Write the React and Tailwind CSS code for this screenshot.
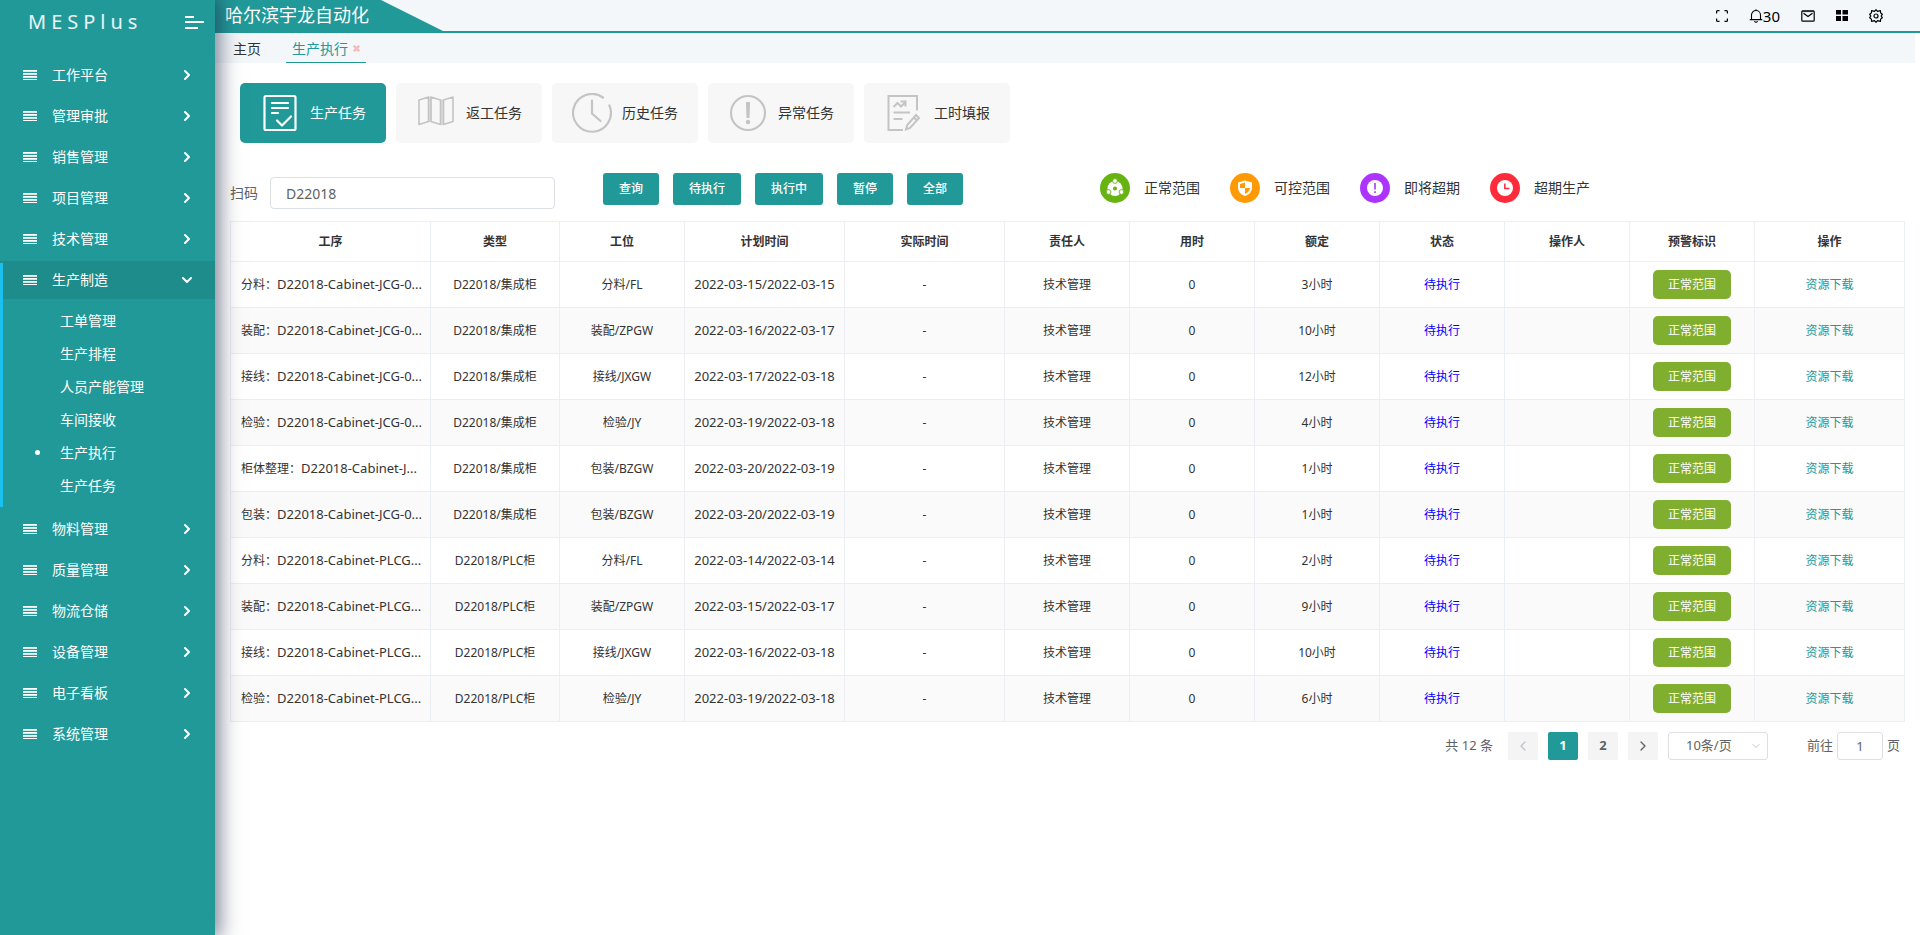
import { ChevronDown, ChevronLeft, ChevronRight } from 'lucide-react'

const menu = [
  '工作平台', '管理审批', '销售管理', '项目管理', '技术管理', '生产制造',
  '物料管理', '质量管理', '物流仓储', '设备管理', '电子看板', '系统管理',
]
const submenu = ['工单管理', '生产排程', '人员产能管理', '车间接收', '生产执行', '生产任务']

const rows = [
  ['分料：', 'D22018-Cabinet-JCG-0...', 'D22018/集成柜', '分料/FL', '2022-03-15/2022-03-15', '3小时'],
  ['装配：', 'D22018-Cabinet-JCG-0...', 'D22018/集成柜', '装配/ZPGW', '2022-03-16/2022-03-17', '10小时'],
  ['接线：', 'D22018-Cabinet-JCG-0...', 'D22018/集成柜', '接线/JXGW', '2022-03-17/2022-03-18', '12小时'],
  ['检验：', 'D22018-Cabinet-JCG-0...', 'D22018/集成柜', '检验/JY', '2022-03-19/2022-03-18', '4小时'],
  ['柜体整理：', 'D22018-Cabinet-J...', 'D22018/集成柜', '包装/BZGW', '2022-03-20/2022-03-19', '1小时'],
  ['包装：', 'D22018-Cabinet-JCG-0...', 'D22018/集成柜', '包装/BZGW', '2022-03-20/2022-03-19', '1小时'],
  ['分料：', 'D22018-Cabinet-PLCG...', 'D22018/PLC柜', '分料/FL', '2022-03-14/2022-03-14', '2小时'],
  ['装配：', 'D22018-Cabinet-PLCG...', 'D22018/PLC柜', '装配/ZPGW', '2022-03-15/2022-03-17', '9小时'],
  ['接线：', 'D22018-Cabinet-PLCG...', 'D22018/PLC柜', '接线/JXGW', '2022-03-16/2022-03-18', '10小时'],
  ['检验：', 'D22018-Cabinet-PLCG...', 'D22018/PLC柜', '检验/JY', '2022-03-19/2022-03-18', '6小时'],
]

const columns = [
  ['工序', 'w-[200px]'],
  ['类型', 'w-[129px]'],
  ['工位', 'w-[125px]'],
  ['计划时间', 'w-[160px]'],
  ['实际时间', 'w-[160px]'],
  ['责任人', 'w-[125px]'],
  ['用时', 'w-[125px]'],
  ['额定', 'w-[125px]'],
  ['状态', 'w-[125px]'],
  ['操作人', 'w-[125px]'],
  ['预警标识', 'w-[125px]'],
  ['操作', 'w-[150px]'],
]

// ── Icons ──────────────────────────────────────────────────────────────────
function BarsIcon() {
  return (
    <svg className="h-[10px] w-[14px]" viewBox="0 0 14 10" fill="currentColor" shapeRendering="crispEdges" aria-hidden="true">
      <path d="M0 0h14v1H0zM0 3h14v1H0zM0 6h14v1H0zM0 9h14v1H0z" />
      <path d="M0 1h14v1H0zM0 4h14v1H0zM0 7h14v1H0z" opacity=".8" />
    </svg>
  )
}

function TaskIcon() {
  return (
    <svg className="h-10 w-10" viewBox="0 0 40 40" fill="none" stroke="currentColor" strokeWidth="2.200" strokeLinecap="round" strokeLinejoin="round" aria-hidden="true">
      <rect x="4.500" y="3" width="31" height="34" rx="1.500" />
      <path d="M12 10h16M12 15h16M12 20h6M17 27.500l5 5 9-9" />
    </svg>
  )
}

function MapIcon() {
  return (
    <svg className="h-10 w-10" viewBox="0 0 40 40" fill="none" stroke="currentColor" strokeWidth="1.600" strokeLinejoin="round" aria-hidden="true">
      <path d="M3 7L12.500 4v24.500L3 31.500zM15 4l9.500 3v24.500L15 28.500zM27.500 7L37 4v24.500l-9.500 3z" />
      <path d="M12.500 4H15v24.500h-2.500zM24.500 7h3v24.500h-3z" fill="currentColor" fillOpacity=".5" strokeWidth=".5" />
    </svg>
  )
}

function HistoryIcon() {
  return (
    <svg className="h-10 w-10" viewBox="0 0 40 40" fill="none" stroke="currentColor" strokeWidth="2.200" strokeLinecap="round" aria-hidden="true">
      <path d="M37.400 12.500A18.900 18.900 0 1 1 31 4.500" />
      <path d="M20 7.500v13l8.500 7.500" />
    </svg>
  )
}

function AbnormalIcon() {
  return (
    <svg className="h-10 w-10" viewBox="0 0 40 40" aria-hidden="true">
      <circle cx="20" cy="20" r="17" fill="none" stroke="currentColor" strokeWidth="2.100" />
      <path d="M17.900 9h4.200l-.6 16h-3z" fill="currentColor" />
      <circle cx="20" cy="29" r="2.200" fill="currentColor" />
    </svg>
  )
}

function ReportIcon() {
  return (
    <svg className="h-10 w-10" viewBox="0 0 40 40" fill="none" stroke="currentColor" strokeWidth="2" aria-hidden="true">
      <path d="M33 17.500V3H4.500v34h14.500" />
      <path d="M9.500 14l4-4 3.500 3.500 4.500-4.500M16.500 8.500h5v5M9.500 19.500H26M9.500 26h9" />
      <path d="M32 22l3 3-9 10-4 1.500 1.200-4.500zM30 24.500l3 3" />
    </svg>
  )
}

function FullscreenIcon() {
  return (
    <svg className="h-3 w-3" viewBox="0 0 12 12" fill="none" stroke="currentColor" strokeWidth="1.200" aria-hidden="true">
      <path d="M.6 3.500V1.600q0-1 1-1h1.900M8.500.6h1.900q1 0 1 1v1.900M11.400 8.500v1.900q0 1-1 1H8.500M3.500 11.400H1.600q-1 0-1-1V8.500" />
    </svg>
  )
}

function BellIcon() {
  return (
    <svg className="h-[14px] w-[14px]" viewBox="0 0 14 14" fill="none" stroke="currentColor" strokeWidth="1.100" aria-hidden="true">
      <path d="M2.500 10.500V6a4.500 4.500 0 0 1 9 0v4.500M.8 10.600h12.400M7 1.500V.3M5.300 12.400q1.700 1.400 3.400 0" />
    </svg>
  )
}

function MailIcon() {
  return (
    <svg className="h-3 w-[14px]" viewBox="0 0 14 12" fill="none" stroke="currentColor" strokeWidth="1.200" aria-hidden="true">
      <rect x=".8" y=".8" width="12.400" height="10.400" rx="1" />
      <path d="M1 1.500h12" opacity=".6" />
      <path d="M2.500 3.200L7 6.600l4.500-3.400" />
    </svg>
  )
}

function GridIcon() {
  return (
    <svg className="h-[11px] w-3" viewBox="0 0 12 11" fill="currentColor" aria-hidden="true">
      <path d="M0 0h5v4.500H0zM6.500 0H12v4.500H6.500zM0 6h5v5H0zM6.500 6H12v5H6.500z" />
    </svg>
  )
}

function GearIcon() {
  return (
    <svg className="h-[14px] w-[14px]" viewBox="0 0 14 14" fill="none" stroke="currentColor" strokeWidth="1.200" strokeLinejoin="round" aria-hidden="true">
      <path d="M7 .7l1.500 1.700 2.900-.8.200 2.300 1.700 1.400L12.200 7l1.100 1.700-1.700 1.400-.2 2.300-2.900-.8L7 13.300l-1.500-1.700-2.900.8-.2-2.300L.7 8.700 1.800 7 .7 5.300l1.700-1.400.2-2.300 2.900.8z" />
      <circle cx="7" cy="7" r="2" />
    </svg>
  )
}

function NormalIcon() {
  return (
    <svg className="h-[30px] w-[30px]" viewBox="0 0 30 30" aria-hidden="true">
      <circle cx="15" cy="15" r="15" fill="#66b312" />
      <circle cx="15" cy="15.500" r="7.500" fill="#fff" />
      <g fill="#fff" stroke="#66b312" strokeWidth=".9">
        <circle cx="15" cy="8" r="2.400" />
        <circle cx="8.500" cy="19" r="2.400" />
        <circle cx="21.500" cy="19" r="2.400" />
      </g>
      <circle cx="15" cy="15.500" r="2" fill="#66b312" />
    </svg>
  )
}

function ShieldIcon() {
  return (
    <svg className="h-[30px] w-[30px]" viewBox="0 0 30 30" aria-hidden="true">
      <circle cx="15" cy="15" r="15" fill="#ff9a05" />
      <path d="M15 7.500l7 2V15q0 5-7 8-7-3-7-8V9.500z" fill="#fff" />
      <path d="M15 9.500V15h-5v-4zM15 15h5q-.3 3.500-5 6z" fill="#ff9a05" />
    </svg>
  )
}

function SoonIcon() {
  return (
    <svg className="h-[30px] w-[30px]" viewBox="0 0 30 30" aria-hidden="true">
      <circle cx="15" cy="15" r="15" fill="#ad33ff" />
      <circle cx="15" cy="15" r="8" fill="#fff" />
      <path d="M14.200 10h1.600v6.500h-1.600zM14.200 18.200h1.600v1.700h-1.600z" fill="#ad33ff" />
    </svg>
  )
}

function OverdueIcon() {
  return (
    <svg className="h-[30px] w-[30px]" viewBox="0 0 30 30" aria-hidden="true">
      <circle cx="15" cy="15" r="15" fill="#ff2b3b" />
      <circle cx="15" cy="15" r="8" fill="#fff" />
      <path d="M14.800 10.500v5h4.700" fill="none" stroke="#ff2b3b" strokeWidth="1.500" />
    </svg>
  )
}

const cards = [
  ['生产任务', TaskIcon],
  ['返工任务', MapIcon],
  ['历史任务', HistoryIcon],
  ['异常任务', AbnormalIcon],
  ['工时填报', ReportIcon],
]

const legend = [
  ['正常范围', NormalIcon],
  ['可控范围', ShieldIcon],
  ['即将超期', SoonIcon],
  ['超期生产', OverdueIcon],
]

// ── Sidebar ────────────────────────────────────────────────────────────────
function Sidebar() {
  return (
    <aside className="relative z-10 w-[215px] shrink-0 bg-[#229999] text-white shadow-[0_0_20px_4px_rgba(29,35,66,0.6)]">
      <div className="flex h-14 items-start justify-between pt-2 pr-[11px] pl-7">
        <span className="text-[20px] leading-7 tracking-[5px] text-white/90">MESPlus</span>
        <button type="button" aria-label="折叠菜单" className="mt-2">
          <svg className="h-[13px] w-[19px]" viewBox="0 0 19 13" fill="currentColor" shapeRendering="crispEdges" aria-hidden="true">
            <path d="M0 0h9v2H0zM0 5h19v2H0zM0 11h13v2H0z" />
          </svg>
        </button>
      </div>
      <nav className="flex flex-col gap-[3px] text-sm">
        {menu.map(name => {
          const open = name === '生产制造'
          const Arrow = open ? ChevronDown : ChevronRight
          return (
            <div key={name} className="relative">
              <button type="button" className={`flex h-[38px] w-full items-center pr-5 pl-[23px] ${open ? 'bg-[#1e8c8a]' : ''}`}>
                <BarsIcon />
                <span className="ml-[15px] flex-1 text-left">{name}</span>
                <Arrow className="h-4 w-4" strokeWidth={3} />
              </button>
              {open && (
                <>
                  <ul className="py-[5px]">
                    {submenu.map(sub => (
                      <li key={sub}>
                        <a href="#" className="flex h-[33px] items-center pl-[35px]">
                          <span className={`mr-5 h-[5px] w-[5px] rounded-full ${sub === '生产执行' ? 'bg-white' : ''}`} />
                          {sub}
                        </a>
                      </li>
                    ))}
                  </ul>
                  <span className="absolute top-[2px] bottom-0 left-0 w-[3px] bg-[#1cc0ee]" />
                </>
              )}
            </div>
          )
        })}
      </nav>
    </aside>
  )
}

// ── Top bar and tabs ───────────────────────────────────────────────────────
function TopBar() {
  return (
    <header className="flex h-[33px] items-stretch justify-between border-b-2 border-[#229999] bg-[#f3f7fa]">
      <h1 className="w-[228px] bg-[#229999] pl-[10px] text-[18px] leading-[30px] text-white [clip-path:polygon(0_0,166px_0,100%_100%,0_100%)]">
        哈尔滨宇龙自动化
      </h1>
      <div className="flex items-center gap-[21px] pr-[37px] text-black">
        <button type="button" aria-label="全屏"><FullscreenIcon /></button>
        <button type="button" className="flex items-center text-[15px] leading-5"><BellIcon />30</button>
        <button type="button" aria-label="邮件"><MailIcon /></button>
        <button type="button" aria-label="应用"><GridIcon /></button>
        <button type="button" aria-label="设置"><GearIcon /></button>
      </div>
    </header>
  )
}

function Tabs() {
  return (
    <div className="mr-[5px] flex h-[30px] gap-[25px] bg-[#f3f7fa] pl-[18px] text-sm">
      <button type="button" className="h-[30px] pt-[2px] text-[#333]">主页</button>
      <div className="flex h-[30px] items-center border-b border-[#229999] px-[6px] pt-[2px] text-[#229999]">
        <button type="button">生产执行</button>
        <button type="button" aria-label="关闭" className="ml-[5px] text-[#fbb9bb]">
          <svg className="h-[7px] w-[7px]" viewBox="0 0 7 7" stroke="currentColor" strokeWidth="2.500" aria-hidden="true">
            <path d="M.8.8l5.400 5.400M6.200.8L.8 6.200" />
          </svg>
        </button>
      </div>
    </div>
  )
}

// ── Filter row ─────────────────────────────────────────────────────────────
function Filters() {
  return (
    <div className="flex h-12 items-start">
      <div className="mt-1 flex items-center">
        <label htmlFor="scan" className="w-10 text-sm text-[#606266]">扫码</label>
        <input id="scan" defaultValue="D22018" className="h-8 w-[285px] rounded border border-[#dcdfe6] bg-white px-[15px] text-sm text-[#606266]" />
      </div>
      <div className="ml-12 flex gap-[14px]">
        {['查询', '待执行', '执行中', '暂停', '全部'].map(name => (
          <button key={name} type="button" className="h-8 rounded-[3px] bg-[#229999] px-4 text-xs font-medium text-white">{name}</button>
        ))}
      </div>
      <ul className="ml-[137px] flex gap-[30px]">
        {legend.map(([name, Icon]) => (
          <li key={name} className="flex items-center gap-[14px] text-sm text-[#333]">
            <Icon />
            {name}
          </li>
        ))}
      </ul>
    </div>
  )
}

// ── Task table ─────────────────────────────────────────────────────────────
function TaskTable() {
  return (
    <table className="w-full table-fixed border-collapse text-center text-xs text-[#333] [&_td]:border [&_td]:border-[#ebeef5] [&_th]:border [&_th]:border-[#ebeef5]">
      <thead>
        <tr className="h-10">
          {columns.map(([name, width]) => (
            <th key={name} className={`${width} font-bold`}>{name}</th>
          ))}
        </tr>
      </thead>
      <tbody>
        {rows.map(([step, code, type, station, plan, quota], i) => (
          <tr key={i} className="h-[46px] even:bg-[#fafafa]">
            <td className="pl-[10px] text-left whitespace-nowrap">
              {step}<span className="text-[13px]">{code}</span>
            </td>
            <td>{type}</td>
            <td>{station}</td>
            <td className="text-[13px]">{plan}</td>
            <td>-</td>
            <td>技术管理</td>
            <td>0</td>
            <td>{quota}</td>
            <td className="text-[#0000ff]">待执行</td>
            <td />
            <td>
              <button type="button" className="h-[29px] rounded-[5px] bg-[#80ae2f] px-[15px] text-white">正常范围</button>
            </td>
            <td><a href="#" className="text-[#229999]">资源下载</a></td>
          </tr>
        ))}
      </tbody>
    </table>
  )
}

function Pagination() {
  return (
    <div className="mt-[10px] flex h-7 items-center justify-end pr-[5px] text-[13px] text-[#606266]">
      <span className="mr-[15px]">共 12 条</span>
      <div className="flex gap-[10px] font-bold">
        <button type="button" aria-label="上一页" className="flex h-7 w-[30px] items-center justify-center rounded-[2px] bg-[#f4f4f5] text-[#c0c4cc]">
          <ChevronLeft className="h-4 w-4" />
        </button>
        <button type="button" className="h-7 w-[30px] rounded-[2px] bg-[#229999] text-white">1</button>
        <button type="button" className="h-7 w-[30px] rounded-[2px] bg-[#f4f4f5]">2</button>
        <button type="button" aria-label="下一页" className="flex h-7 w-[30px] items-center justify-center rounded-[2px] bg-[#f4f4f5]">
          <ChevronRight className="h-4 w-4" />
        </button>
      </div>
      <div className="relative ml-[10px]">
        <select aria-label="每页条数" className="h-7 w-[100px] appearance-none rounded-[3px] border border-[#dcdfe6] bg-white pl-[17px]">
          <option>10条/页</option>
        </select>
        <ChevronDown className="pointer-events-none absolute top-2 right-[6px] h-3 w-3 text-[#c0c4cc]" />
      </div>
      <label className="ml-[39px] flex items-center gap-1">
        前往
        <input defaultValue="1" className="h-7 w-[46px] rounded-[3px] border border-[#dcdfe6] bg-white text-center" />
        页
      </label>
    </div>
  )
}

export default function App() {
  return (
    <div className="flex min-h-screen bg-white font-['Noto_Sans','Noto_Sans_CJK_SC',sans-serif]">
      <Sidebar />
      <div className="min-w-0 flex-1">
        <TopBar />
        <Tabs />
        <main className="px-[15px] pt-5">
          <div className="mb-[30px] flex gap-[10px] pl-[10px]">
            {cards.map(([name, Icon], i) => (
              <button key={name} type="button" className={`flex h-[60px] w-[146px] items-center gap-[10px] rounded-[5px] pl-5 text-sm ${i === 0 ? 'bg-[#229999] text-white' : 'bg-[#f7f7f7] text-[#333]'}`}>
                <span className={i === 0 ? 'text-white' : 'text-[#c4c4c4]'}><Icon /></span>
                {name}
              </button>
            ))}
          </div>
          <Filters />
          <TaskTable />
          <Pagination />
        </main>
      </div>
    </div>
  )
}
